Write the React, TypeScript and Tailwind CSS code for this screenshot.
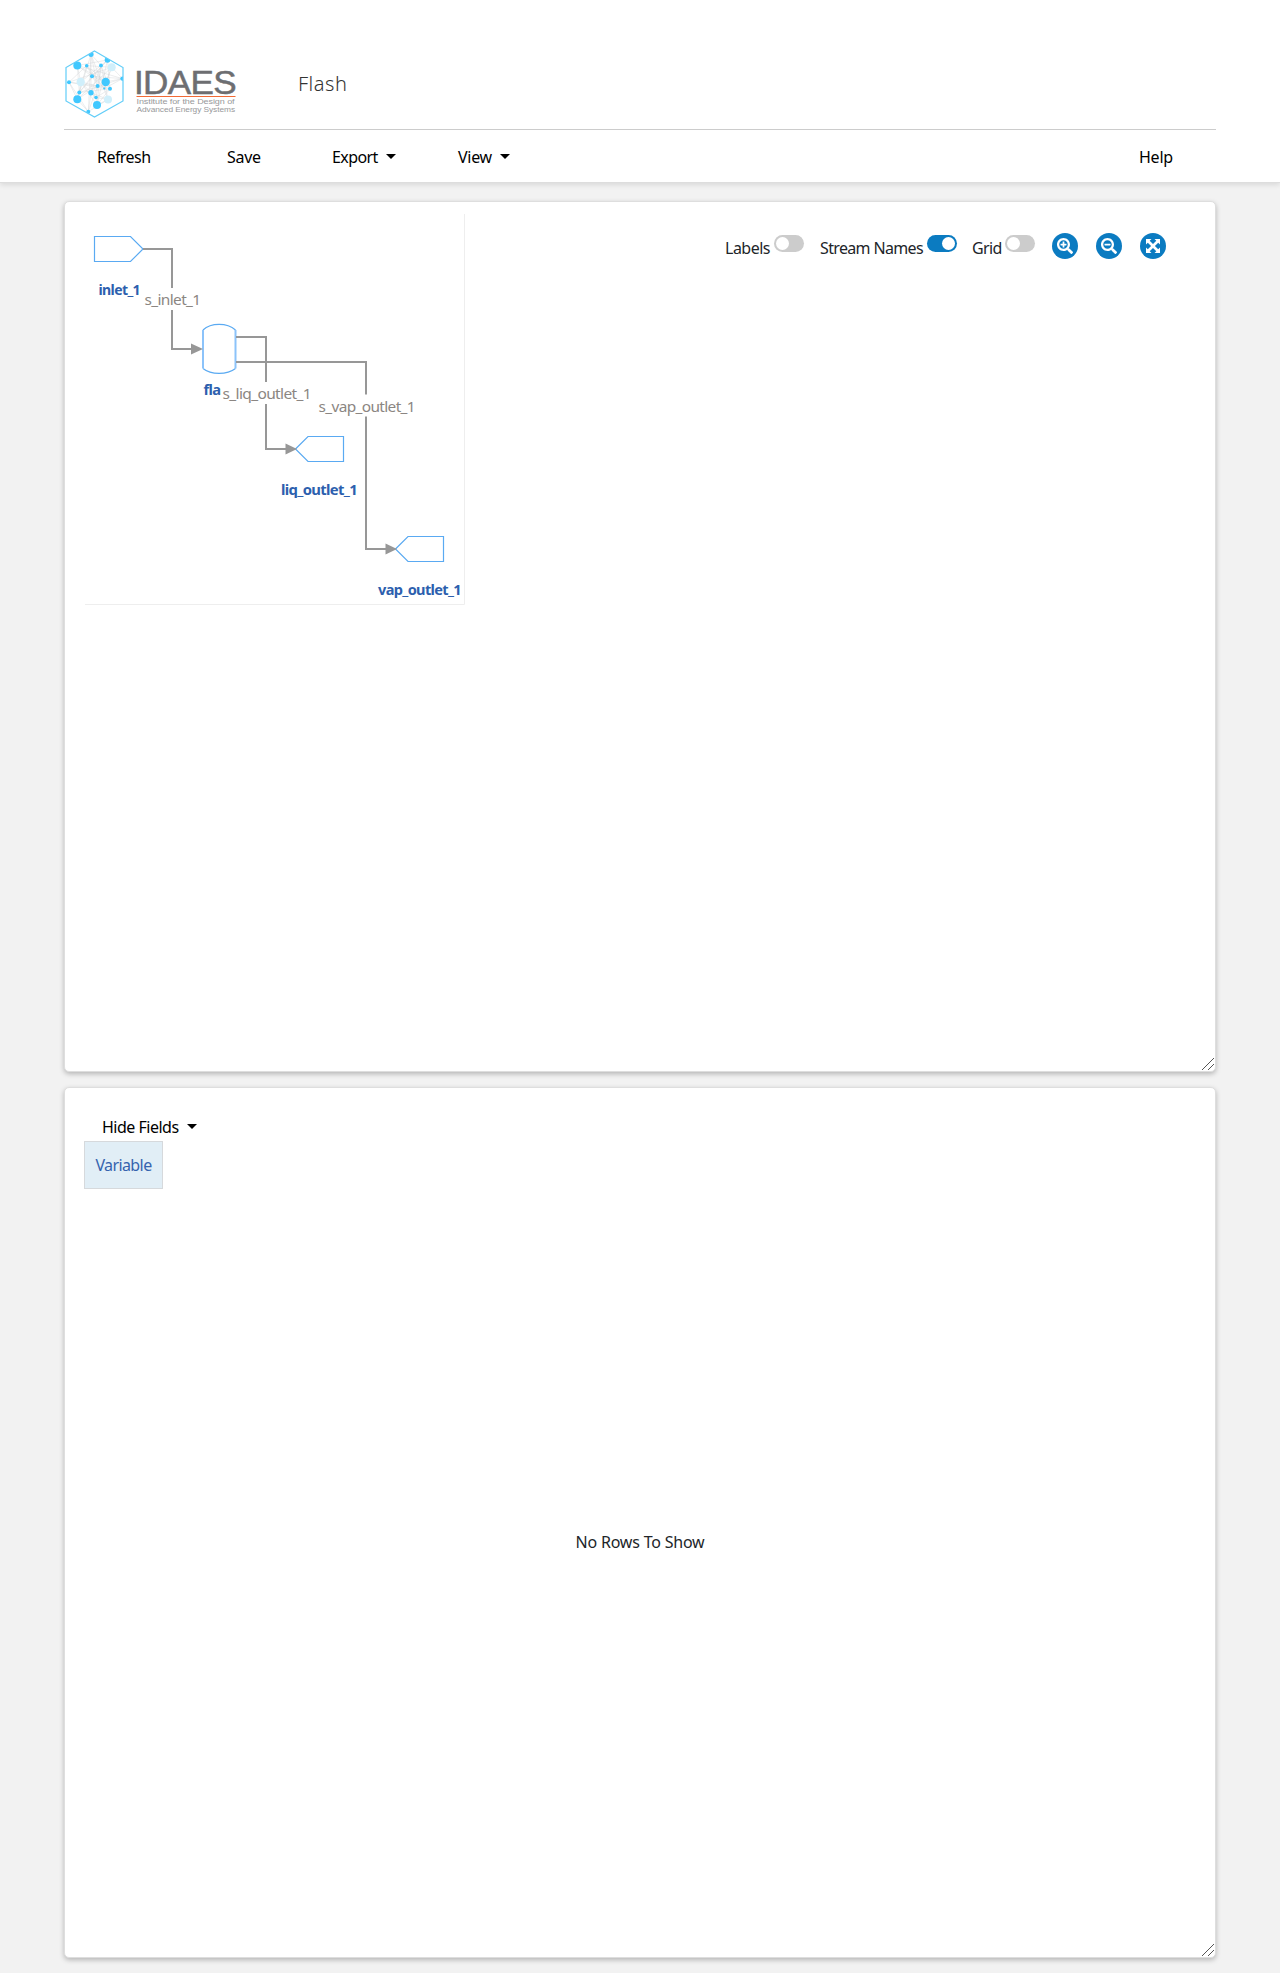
import { FaSearchMinus, FaSearchPlus } from "react-icons/fa";
import type { ReactNode } from "react";

const hubs = [
  [12.3, 15.5, 4], [12.3, 49.3, 4], [32, 55, 4], [40.7, 32, 4.2], [26, 4.3, 2.6], [42.5, 10, 2.8],
  [21.7, 15.7, 1.8], [36, 15.4, 1.9], [27, 26.3, 2], [32.6, 36, 2], [45, 38.8, 2], [39.3, 38.5, 1.1],
  [26, 42.7, 2.7], [14.3, 42.5, 2], [4, 32.2, 2], [31, 47.5, 1.8], [57.5, 28.6, 2.2], [23.3, 61.7, 2],
];
const pale = [[15.7, 32, 4.2], [46.7, 17.3, 4], [43, 49.5, 4]];

function Logo() {
  const nodes = [...hubs, ...pale];
  return (
    <svg width="172" height="68" viewBox="-1 0 172 68" className="block" fontFamily="Liberation Sans, sans-serif">
      <defs>
        <clipPath id="hex"><path d="M29.5 1 58 17.5V51L29.5 67 1 51V17.5Z" /></clipPath>
      </defs>
      <g clipPath="url(#hex)">
        <g stroke="#cfd2d4" strokeWidth=".4">
          {nodes.flatMap((a, i) =>
            [3, 5, 8].map((k) => {
              const b = nodes[(i + k) % nodes.length];
              return <line key={`${i}-${k}`} x1={a[0]} y1={a[1]} x2={b[0]} y2={b[1]} />;
            }),
          )}
        </g>
        {hubs.map(([x, y, r], i) => <circle key={i} cx={x} cy={y} r={r} fill="#40c8ff" />)}
        {pale.map(([x, y, r], i) => <circle key={i} cx={x} cy={y} r={r} fill="#d0effb" />)}
      </g>
      <path d="M29.5 1 58 17.5V51L29.5 67 1 51V17.5Z" fill="none" stroke="#62cdf8" strokeWidth="1.2" />
      <text x="69" y="43.8" fontSize="32.5" fill="#6d6e71" stroke="#6d6e71" strokeWidth=".5" textLength="102" lengthAdjust="spacingAndGlyphs">IDAES</text>
      <path d="M71.500 46.500H170.500" stroke="#f26a35" strokeWidth="1.100" />
      <g transform="scale(.1)" fontSize="66" fill="#98999b">
        <text x="715" y="543" textLength="980" lengthAdjust="spacingAndGlyphs">Institute for the Design of</text>
        <text x="715" y="615" textLength="985" lengthAdjust="spacingAndGlyphs">Advanced Energy Systems</text>
      </g>
    </svg>
  );
}

function Caret() {
  return <span className="mt-[-2px] h-0 w-0 shrink-0 border-x-[5px] border-t-[5px] border-x-transparent border-t-current" />;
}

function Toggle({ on = false }: { on?: boolean }) {
  return (
    <span className={`flex h-[17px] w-[30px] items-center rounded-full px-[2px] ${on ? "justify-end bg-[#0b7bc1]" : "bg-[#ccc]"}`}>
      <span className="size-[13px] rounded-full bg-white" />
    </span>
  );
}

function RoundButton({ children }: { children: ReactNode }) {
  return (
    <button className="flex size-[26px] items-center justify-center rounded-full bg-[#0b7bc1] text-white">{children}</button>
  );
}

function ResizeGrip() {
  return (
    <svg width="14" height="14" viewBox="0 0 14 14" className="absolute bottom-[-1px] right-0" stroke="#555" fill="none" shapeRendering="crispEdges">
      <path d="M0.500 12.500L12.500 0.500M6.500 12.500L12.500 6.500" />
    </svg>
  );
}

function Diagram() {
  return (
    <svg width="380" height="391" viewBox="85 214 380 391" className="block" fontFamily="Noto Sans, sans-serif">
      <path d="M464.500 214V604.500H85" fill="none" stroke="#eee" />
      <g fill="#fff" stroke="#5aaaf2" strokeWidth="1.200">
        <path d="M94.500 236.500H130.500L143 249L130.500 261.500H94.500Z" />
        <path d="M295.500 449L308 436.500H343.500V461.500H308Z" />
        <path d="M395.500 549L408 536.500H443.500V561.500H408Z" />
        <path d="M203 330C211 322.500 227 322.500 235.500 330M203 368.500C211 375 227 375 235.500 368.500" />
        <path d="M203 330V368.500M235.500 330V368.500" strokeWidth="2" stroke="#8cc3fa" />
      </g>
      <g fontWeight="700" fontSize="13.500" fill="#2d5fae">
        <text x="98.500" y="295" textLength="41.500" lengthAdjust="spacingAndGlyphs">inlet_1</text>
        <text x="203.500" y="395" textLength="32.500" lengthAdjust="spacingAndGlyphs">flash</text>
        <text x="281" y="495" textLength="76" lengthAdjust="spacingAndGlyphs">liq_outlet_1</text>
        <text x="378" y="595" textLength="83" lengthAdjust="spacingAndGlyphs">vap_outlet_1</text>
      </g>
      <g fill="none" stroke="#979797" strokeWidth="2">
        <path d="M143 249H172V349H192" />
        <path d="M236 337H266V449H286" />
        <path d="M236 362H366V549H386" />
      </g>
      <g fill="#979797">
        <path d="M191 343.500L203 349L191 354.500Z" />
        <path d="M285.500 443.500L297 449L285.500 454.500Z" />
        <path d="M385.500 543.500L397 549L385.500 554.500Z" />
      </g>
      <g fill="#fff">
        <rect x="144" y="288" width="56" height="22" />
        <rect x="221" y="382" width="89" height="22" />
        <rect x="318" y="394.500" width="97" height="22" />
      </g>
      <g fontSize="14.500" fill="#8b8682">
        <text x="144.500" y="305" textLength="56" lengthAdjust="spacingAndGlyphs">s_inlet_1</text>
        <text x="222.500" y="399" textLength="88.500" lengthAdjust="spacingAndGlyphs">s_liq_outlet_1</text>
        <text x="318.500" y="412" textLength="96.500" lengthAdjust="spacingAndGlyphs">s_vap_outlet_1</text>
      </g>
    </svg>
  );
}

const panel = "relative mx-16 h-[871px] overflow-hidden rounded-[5px] border border-[#dedede] bg-white shadow-[0_2px_5px_rgba(0,0,0,0.25)]";

export default function App() {
  return (
    <div className="min-h-[1973px] bg-[#f2f2f2] text-[16px] tracking-[-0.6px] text-[#212529] [font-family:'Noto_Sans',sans-serif]">
      <header className="h-[183px] border-b border-[#ddd] bg-white px-16 pt-[50px] shadow-[0_2px_5px_rgba(0,0,0,0.1)]">
        <div className="flex h-[80px] border-b border-[#ccc]">
          <Logo />
          <h1 className="ml-[62px] mt-[19px] text-[20px] font-light leading-[30px] tracking-[0.5px] text-[#333]">Flash</h1>
        </div>
        <nav className="flex pt-[15px] leading-6 text-black">
          <a className="ml-[33px] w-[130px] tracking-[-0.55px]">Refresh</a>
          <a className="w-[105px] tracking-[-0.3px]">Save</a>
          <a className="flex w-[126px] items-center gap-2 tracking-[-0.6px]">Export<Caret /></a>
          <a className="flex items-center gap-2 tracking-[-0.3px]">View<Caret /></a>
          <a className="ml-auto mr-[43px] tracking-[-0.2px]">Help</a>
        </nav>
      </header>
      <main className="flex flex-col gap-[15px] pt-[18px]">
        <section className={`flex justify-between ${panel}`}>
          <div className="pl-5 pt-3"><Diagram /></div>
          <div className="flex pr-[49px] pt-[31px] leading-6">
            <span className="mt-[3px] w-[49px] tracking-[-0.5px]">Labels</span><span className="mt-[2px]"><Toggle /></span>
            <span className="ml-[16px] mt-[3px] w-[107px] whitespace-nowrap tracking-[-0.65px]">Stream Names</span><span className="mt-[2px]"><Toggle on /></span>
            <span className="ml-[15px] mt-[3px] w-[33px]">Grid</span><span className="mt-[2px]"><Toggle /></span>
            <div className="ml-[17px] flex gap-[18px]">
              <RoundButton><FaSearchPlus size={16} /></RoundButton>
              <RoundButton><FaSearchMinus size={16} /></RoundButton>
              <RoundButton>
                <svg width="16" height="16" viewBox="0 0 16 16" fill="currentColor">
                  <path d="M1 1h5.500L4.700 2.800 8 6.100l3.300-3.300L9.500 1H15v5.500l-1.800-1.800L9.900 8l3.300 3.300L15 9.500V15H9.500l1.800-1.800L8 9.900l-3.300 3.300L6.500 15H1V9.500l1.800 1.800L6.100 8 2.800 4.700 1 6.500Z" />
                </svg>
              </RoundButton>
            </div>
          </div>
          <ResizeGrip />
        </section>
        <section className={`flex flex-col items-start pl-[19px] pt-[25px] ${panel}`}>
          <button className="ml-[18px] flex h-[28px] items-center gap-2 leading-6 tracking-[-0.5px] text-black">Hide Fields<Caret /></button>
          <div className="flex h-[48px] w-[79px] items-center justify-center border border-[#d6d9dc] bg-[#e1eef6] text-[#3563ae]">Variable</div>
          <p className="mr-[19px] mt-[341px] self-center leading-6 tracking-[-0.2px]">No Rows To Show</p>
          <ResizeGrip />
        </section>
      </main>
    </div>
  );
}
